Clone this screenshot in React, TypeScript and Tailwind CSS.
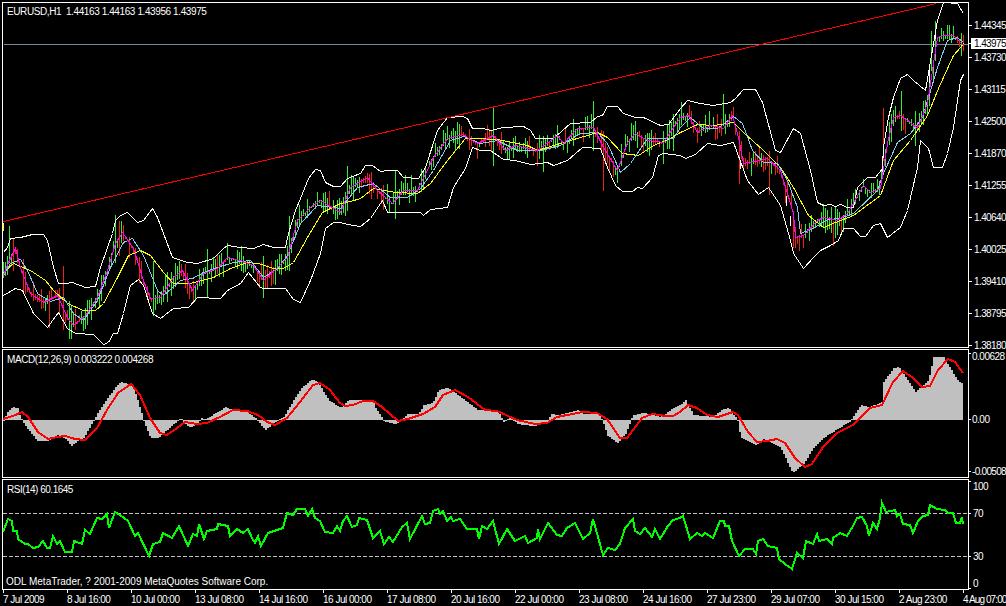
const upperBand =
  "3,252 7,247 10,238 20,237 32,234 43,234 47,240 53,267 58,283 65,283 72,282 85,287 95,286 100,267 112,233 115,220 120,215 127,212 137,222 143,220 152,208 157,217 163,233 172,257 187,262 197,263 213,258 223,248 227,245 240,247 253,248 263,244 273,247 285,247 288,233 295,210 300,198 308,178 315,169 320,170 325,182 333,186 340,186 347,178 360,173 365,165 372,165 380,171 387,170 397,170 403,177 418,178 425,167 437,130 447,117 462,116 467,118 472,128 483,128 490,130 503,127 523,126 530,130 535,138 553,138 570,123 590,122 597,116 602,115 607,106 617,106 623,113 635,117 643,117 660,125 668,124 680,108 687,100 700,103 713,105 730,102 735,98 743,89 755,89 762,102 775,150 780,152 793,128 800,133 810,170 817,202 823,205 830,204 835,206 840,204 847,207 853,207 857,187 867,177 875,177 882,168 883,147 888,117 893,97 900,78 907,74 913,80 925,90 937,20 943,2 957,3 963,13";
const lowerBand =
  "3,295 15,288 22,290 33,313 47,327 58,312 67,328 75,333 93,334 103,344 108,342 113,333 117,333 123,313 130,285 138,279 143,285 152,313 160,318 173,308 188,307 197,297 220,298 227,290 240,283 248,272 260,287 263,288 285,288 293,299 300,302 310,280 320,253 325,228 333,222 340,222 347,224 360,226 370,218 382,200 387,212 397,212 420,212 423,215 430,209 447,207 453,187 465,168 472,147 480,150 490,150 503,159 515,160 530,164 547,162 553,165 567,160 582,147 600,148 607,167 615,185 622,191 632,191 637,187 642,188 652,177 658,155 663,153 680,155 685,158 695,154 707,143 720,145 733,142 747,180 758,194 768,187 780,205 790,240 793,253 803,268 813,257 820,250 830,245 838,240 843,228 853,228 860,236 865,236 873,225 880,223 887,237 900,227 907,210 917,167 920,140 928,148 933,167 942,167 947,153 953,127 960,80 963,74";
const slowMa =
  "3,272 13,263 30,270 45,280 53,290 67,303 83,310 95,310 103,303 117,277 128,255 140,250 150,255 163,272 173,283 190,283 213,277 230,268 247,262 258,263 273,268 283,268 293,262 307,237 322,212 340,203 350,201 360,198 373,188 395,192 417,193 430,183 447,160 465,138 473,138 497,139 527,145 537,150 553,145 570,140 597,132 607,137 622,153 638,155 653,145 670,138 680,132 697,124 713,125 733,122 743,132 763,150 780,167 793,187 808,215 823,227 835,222 853,215 880,195 893,160 910,140 927,115 938,88 953,55 960,47 963,43";
const midMa =
  "3,275 10,263 20,259 27,270 37,293 50,301 63,297 73,313 83,320 97,300 110,267 123,242 132,238 143,255 157,290 163,295 180,280 192,278 203,272 217,267 233,262 250,260 263,277 277,268 287,255 300,223 317,205 340,208 357,187 373,183 390,197 407,197 420,188 433,170 450,140 463,136 480,143 497,140 517,150 540,150 560,145 580,133 597,132 607,143 620,172 630,163 647,138 673,138 680,127 690,117 703,128 717,128 733,116 742,123 752,150 763,162 777,163 787,180 797,207 800,233 813,228 827,219 840,218 853,213 877,190 883,173 897,142 910,133 922,117 937,67 947,40 957,37 963,42";
const fastMa =
  "3,275 8,262 15,248 20,267 30,293 43,302 57,295 67,317 73,325 85,315 97,297 107,270 115,243 122,232 133,248 143,280 150,298 160,297 173,277 182,270 192,290 203,273 217,268 227,257 240,260 253,265 263,280 277,267 287,257 297,220 310,207 320,200 340,212 350,187 367,177 377,190 392,203 403,190 417,190 433,157 447,138 462,134 477,143 493,135 505,150 515,145 537,150 557,135 563,143 577,128 593,127 603,147 617,170 627,142 635,133 647,140 663,142 680,117 688,115 697,132 710,125 723,128 732,115 738,137 743,163 760,160 767,158 780,170 793,213 795,237 803,235 817,220 823,217 837,220 847,213 863,185 870,192 880,188 887,143 893,117 900,115 910,122 917,128 927,103 937,37 943,35 953,35 963,45";

const macdHist =
  "3,420 7,412 12,407 17,408 20,418 27,428 37,440 47,440 57,434 65,438 71,445 77,440 83,437 93,420 100,408 107,398 115,387 120,382 132,385 137,400 143,420 150,437 158,437 163,432 177,420 180,418 185,423 190,427 197,422 202,417 204,420 217,412 225,407 233,410 247,412 257,420 265,429 273,422 283,417 295,397 302,387 312,379 318,383 328,400 340,408 348,400 360,400 372,400 375,408 383,420 393,423 398,422 407,414 418,414 423,405 432,403 438,390 447,388 455,393 467,402 477,410 497,411 503,421 510,417 517,423 533,425 547,422 550,414 557,415 567,413 577,410 583,414 597,413 602,420 607,435 617,442 625,433 630,420 633,415 643,413 660,417 673,408 680,405 685,400 693,415 713,417 722,409 728,408 737,420 740,437 755,444 763,438 780,447 792,472 803,463 813,447 823,437 850,420 860,405 868,407 882,402 883,382 893,368 898,367 915,392 928,380 933,357 943,357 958,382 963,384";
const macdSignal =
  "3,419 13,416 22,412 28,417 38,432 48,439 57,437 65,436 75,439 85,440 97,428 107,410 118,393 131,384 140,395 150,418 160,433 167,435 177,428 185,422 197,424 207,423 220,417 233,410 247,411 258,415 267,422 275,425 287,418 300,402 313,385 320,383 330,390 340,403 345,406 353,405 363,401 373,401 382,407 398,421 408,419 423,414 435,407 443,395 455,390 468,397 485,410 497,411 517,420 535,424 547,423 557,417 567,415 583,412 597,413 607,419 620,438 627,438 642,418 652,414 660,415 665,416 673,416 680,412 688,405 697,408 707,415 718,417 733,412 738,415 748,432 757,442 767,441 777,439 785,443 795,458 805,467 812,464 823,447 837,433 853,425 870,408 882,405 893,382 903,371 913,378 922,387 930,386 938,370 948,359 955,362 963,373";
const rsiLine =
  "3,532 8,519 12,521 13,531 17,531 18,539 25,544 28,544 33,548 38,547 43,541 47,548 50,548 53,536 57,544 60,541 65,552 72,552 74,541 82,544 85,530 90,534 97,518 102,519 107,514 109,528 115,512 120,515 128,521 135,536 138,533 149,556 153,544 160,542 163,533 172,538 179,526 188,546 193,534 197,536 199,524 204,539 207,531 217,529 218,524 228,526 230,536 237,529 243,533 248,529 252,538 255,543 258,536 261,546 268,533 283,528 287,513 293,515 297,509 305,509 308,516 312,509 315,518 320,521 325,532 333,533 337,526 340,531 343,521 347,516 352,527 357,525 359,518 367,520 373,538 380,531 384,544 389,537 393,542 402,527 407,523 410,539 422,516 425,524 430,523 433,511 438,509 440,514 443,511 447,521 451,517 453,521 460,519 467,529 477,529 479,539 482,526 487,529 493,521 499,544 507,529 515,541 525,536 528,543 537,538 538,529 540,539 548,523 557,535 562,536 567,528 575,523 583,539 590,533 593,519 603,555 608,548 615,550 620,544 625,528 633,519 635,531 640,534 645,528 652,537 655,529 660,539 668,526 673,520 680,518 683,516 690,539 697,533 702,536 705,533 713,538 720,521 724,521 725,526 729,526 732,541 739,556 745,549 753,549 756,554 758,541 763,539 768,546 777,548 779,559 785,564 792,569 797,553 803,558 806,541 813,544 817,534 819,541 827,539 832,544 833,538 840,533 847,536 853,526 857,518 862,517 867,526 869,536 873,523 877,529 880,518 882,503 886,512 895,510 897,516 900,514 903,524 910,525 913,533 918,521 923,516 928,515 930,505 937,509 945,510 948,513 953,513 956,523 960,523 962,517 963,524";

// x, high, low, up? - the bars that stick out of the band
const spikes: [number, number, number, boolean][] = [
  [9, 225, 262, true], [13, 238, 270, false], [23, 258, 290, false], [49, 290, 327, false], [63, 265, 329, false],
  [69, 300, 338, true], [71, 304, 338, true], [115, 214, 262, true], [119, 220, 255, false], [153, 260, 315, true],
  [207, 248, 296, true], [263, 255, 297, true], [289, 215, 270, true], [347, 165, 210, true], [395, 170, 218, true],
  [493, 107, 165, true], [543, 135, 171, true], [593, 100, 150, true], [603, 130, 190, false], [617, 165, 182, true],
  [663, 130, 163, true], [673, 113, 150, true], [723, 93, 125, true], [739, 130, 183, false], [769, 150, 194, false],
  [793, 210, 247, false], [803, 235, 247, false], [833, 220, 245, false], [835, 205, 237, true], [883, 107, 160, false],
  [901, 90, 130, true], [915, 110, 145, true], [931, 30, 70, true], [935, 20, 60, true], [961, 32, 55, true], [963, 34, 50, false],
];
const dojis = [[929, 68, 82], [935, 28, 38], [882, 155, 172], [786, 195, 205], [790, 215, 225], [740, 160, 168]];

const parse = (s: string) => s.split(" ").map((p) => p.split(",").map(Number));

function at(pts: number[][], x: number) {
  for (let i = 1; i < pts.length; i++) {
    if (x <= pts[i][0]) {
      const [x0, y0] = pts[i - 1];
      const [x1, y1] = pts[i];
      return y0 + ((y1 - y0) * (x - x0)) / (x1 - x0 || 1);
    }
  }
  return pts[pts.length - 1][1];
}

function makeBars() {
  const fast = parse(fastMa);
  let seed = 7;
  const rnd = () => {
    seed = (seed * 16807) % 2147483647;
    return seed / 2147483647;
  };
  const bars: { x: number; y1: number; y2: number; up: boolean }[] = [];
  let up = true;
  for (let x = 3; x <= 963; x += 2) {
    const mid = at(fast, x);
    const slope = at(fast, x + 4) - at(fast, x - 4);
    // colours come in runs and follow the trend
    if (rnd() > 0.68) up = rnd() > 0.5 + slope * 0.05;
    if (Math.abs(slope) > 8) up = slope < 0;
    const a = rnd();
    const b = rnd();
    const y1 = Math.round(mid - 1 - a * a * 15);
    const y2 = Math.round(mid + 1 + b * b * 15);
    const spike = spikes.find((s) => s[0] === x);
    if (spike) bars.push({ x, y1: spike[1], y2: spike[2], up: spike[3] });
    else bars.push({ x, y1, y2, up });
  }
  return bars;
}

function PriceChart() {
  const bars = makeBars();
  return (
    <svg className="block w-[965px] h-[344px]" viewBox="3 3 965 344" shapeRendering="crispEdges" fill="none">
      <g transform="translate(.5 .5)">
        <line x1="3" y1="44" x2="968" y2="44" stroke="#778899" />
        {bars.map((b) => (
          <line key={b.x} x1={b.x} y1={b.y1} x2={b.x} y2={b.y2} stroke={b.up ? "#33ee33" : "#ee2211"} />
        ))}
        {dojis.map(([x, y1, y2]) => (
          <line key={x} x1={x} y1={y1} x2={x} y2={y2} stroke="#ffffff" />
        ))}
        <line x1="3" y1="222" x2="3" y2="230" stroke="#ffff00" />
        <polyline points={upperBand} stroke="#fffff0" />
        <polyline points={lowerBand} stroke="#fffff0" />
        <polyline points={slowMa} stroke="#ffff00" />
        <polyline points={midMa} stroke="#87ceeb" />
        <polyline points={fastMa} stroke="#ff00ff" />
        <line x1="3" y1="221" x2="936" y2="3" stroke="#ff0000" />
      </g>
    </svg>
  );
}

function MacdChart() {
  const hist = parse(macdHist);
  let d = "";
  for (let x = 3; x < 963; x += 2) {
    const y = Math.round(at(hist, x));
    d += y < 420 ? `M${x} 420V${y}h2V420z` : `M${x} 420V${y + 1}h2V420z`;
  }
  return (
    <svg className="block w-[965px] h-[127px]" viewBox="3 350 965 127" fill="none">
      <path d={d} fill="#c0c0c0" shapeRendering="crispEdges" />
      <polyline points={macdSignal} stroke="#ff0000" strokeWidth="2" shapeRendering="crispEdges" />
    </svg>
  );
}

function RsiChart() {
  return (
    <svg className="block w-[965px] h-[109px]" viewBox="3 480 965 109" fill="none" shapeRendering="crispEdges">
      <line x1="3" y1="513.5" x2="968" y2="513.5" stroke="#c0c0c0" strokeDasharray="4 2" />
      <line x1="3" y1="556.5" x2="968" y2="556.5" stroke="#c0c0c0" strokeDasharray="4 2" />
      <polyline points={rsiLine} stroke="#00ff00" strokeWidth="2" />
    </svg>
  );
}

const prices = ["1.44345", "1.43730", "1.43115", "1.42500", "1.41870", "1.41255", "1.40640", "1.40025", "1.39410", "1.38795", "1.38180"];
const times = ["7 Jul 2009", "8 Jul 16:00", "10 Jul 00:00", "13 Jul 08:00", "14 Jul 16:00", "16 Jul 00:00", "17 Jul 08:00", "20 Jul 16:00", "22 Jul 00:00", "23 Jul 08:00", "24 Jul 16:00", "27 Jul 23:00", "29 Jul 07:00", "30 Jul 15:00", "2 Aug 23:00", "4 Aug 07:00"];

const legend = "absolute whitespace-pre text-white leading-[12px]";

export default function App() {
  return (
    <div className="w-[1006px] h-[606px] bg-black overflow-hidden pt-[2px] pl-[2px] flex flex-col gap-px font-['Liberation_Sans',sans-serif] text-[10px] tracking-[-0.5px] text-white">
      {/* price pane */}
      <div className="flex h-[346px] relative">
        <div className="w-[967px] shrink-0 border border-white relative">
          <PriceChart />
          <div className={`${legend} left-[4px] top-[3px] tracking-[-0.4px]`}>EURUSD,H1  1.44163 1.44163 1.43956 1.43975</div>
        </div>
        <div className="flex-1 pt-[7px] tracking-[-0.6px]">
          {prices.map((p) => (
            <div key={p} className="h-[32px] flex items-center gap-[2px] whitespace-nowrap">
              <div className="w-[3px] h-px bg-white shrink-0" />
              <span>{p}</span>
            </div>
          ))}
        </div>
        <div className="absolute left-[967px] top-[36px] flex items-center tracking-[-0.6px]">
          <div className="w-[2px] h-px bg-white" />
          <div className="w-[35px] h-[11px] bg-white text-black leading-[11px] pl-[3px] whitespace-nowrap">1.43975</div>
        </div>
      </div>

      {/* macd pane */}
      <div className="flex h-[129px]">
        <div className="w-[967px] shrink-0 border border-white relative">
          <MacdChart />
          <div className={`${legend} left-[4px] top-[4px] tracking-[-0.4px]`}>MACD(12,26,9) 0.003222 0.004268</div>
        </div>
        <div className="flex-1 whitespace-nowrap">
          <div className="h-[12px] mt-px flex items-center gap-px">
            <div className="w-[2px] h-px bg-white shrink-0 self-start mt-[3px]" />
            <span>0.00628</span>
          </div>
          <div className="h-[12px] mt-[51px] flex items-center gap-px">
            <div className="w-[2px] h-px bg-white shrink-0" />
            <span>0.00</span>
          </div>
          <div className="h-[12px] mt-[40px] flex items-center gap-px tracking-[-0.7px]">
            <div className="w-[2px] h-px bg-white shrink-0" />
            <span>-0.00508</span>
          </div>
        </div>
      </div>

      {/* rsi pane */}
      <div className="flex h-[111px]">
        <div className="w-[967px] shrink-0 border border-white relative">
          <RsiChart />
          <div className={`${legend} left-[4px] top-[4px]`}>RSI(14) 60.1645</div>
          <div className={`${legend} left-[3px] top-[96px] tracking-normal`}>ODL MetaTrader, ? 2001-2009 MetaQuotes Software Corp.</div>
        </div>
        <div className="flex-1 whitespace-nowrap">
          <div className="h-[12px] mt-px flex items-center gap-[2px]">
            <div className="w-[2px] h-px bg-white shrink-0 self-start mt-px" />
            <span>100</span>
          </div>
          <div className="h-[12px] mt-[15px] flex items-center gap-[2px]">
            <div className="w-[2px] h-px bg-white shrink-0" />
            <span>70</span>
          </div>
          <div className="h-[12px] mt-[31px] flex items-center gap-[2px]">
            <div className="w-[2px] h-px bg-white shrink-0" />
            <span>30</span>
          </div>
          <div className="h-[12px] mt-[15px] flex items-center gap-[2px]">
            <div className="w-[2px] h-px bg-white shrink-0 self-end" />
            <span>0</span>
          </div>
        </div>
      </div>

      {/* time axis */}
      <div className="flex pl-px -mt-px">
        {times.map((t, i) => (
          <div key={t} className="w-[64px] shrink-0 whitespace-nowrap">
            <div className="w-px h-[3px] bg-white" />
            <div className={i === 15 ? "leading-[12px] mt-px tracking-[-0.9px]" : "leading-[12px] mt-px"}>{t}</div>
          </div>
        ))}
      </div>
    </div>
  );
}
